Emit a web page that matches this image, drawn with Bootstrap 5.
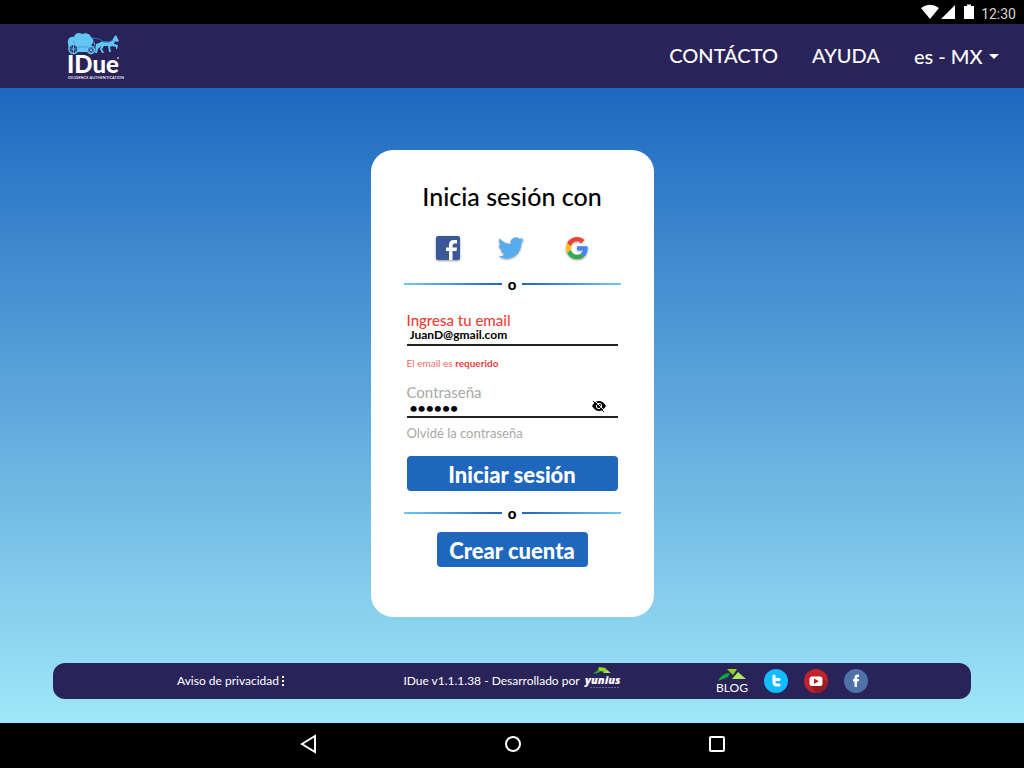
<!DOCTYPE html>
<html lang="es-MX">
<head>
<meta charset="utf-8">
<meta name="viewport" content="width=device-width, initial-scale=1">
<title>IDue - Inicia sesión</title>
<link rel="stylesheet" href="https://cdn.jsdelivr.net/npm/bootstrap@5.3.0/dist/css/bootstrap.min.css">
<style>
:root { --navy: #29235a; --brand: #1e67bd; --sky: #6bc9f2; }
body { font-family: Lato, "Open Sans", sans-serif; background: #000; color: #000; }
svg { display: block; }
a { text-decoration: none; }
.status-bar { height: 24px; padding-right: 8px; font: 14px/24px Roboto, sans-serif; color: #d4d4d4; }
.clock { padding-top: 3px; margin-left: 7px; }
.top-nav { height: 64px; padding: 0 25px 0 64px; background: var(--navy); }
.top-nav a, .lang select { color: #fff; font-size: 20px; line-height: 24px; font-weight: 500; }
.nav-items { gap: 34px; }
.lang { position: relative; }
.lang select { display: block; appearance: none; background: none; border: 0; padding: 0 14px 0 0; width: 85px; }
.lang::after { content: ""; position: absolute; right: 0; top: 10px; border: 5px solid transparent; border-top-color: #fff; border-bottom: 0; pointer-events: none; }
main { background: linear-gradient(#1e68c0, #9fe7f8); padding: 62px 53px 24px; }
.login { width: 283px; border-radius: 22px; padding: 28px 33px 50px; }
.login h1 { font-size: 25px; line-height: 36px; margin-bottom: 18px; }
.social { gap: 32px; height: 30px; padding-right: 1px; }
.social svg { filter: drop-shadow(0 1px 1px rgba(0,0,0,.4)); }
.divider { height: 16px; margin-top: 14px; font-size: 15px; line-height: 16px; font-weight: 900; }
.divider span { width: 20px; }
.divider::before, .divider::after { content: ""; flex: 1; height: 2px; background: linear-gradient(90deg, var(--sky), var(--brand)); }
.divider::after { background: linear-gradient(90deg, var(--brand), var(--sky)); }
.fields { padding: 0 3px; margin-top: 20px; }
.fields label { display: block; font-size: 15px; line-height: 16px; color: #a8a8a8; }
.fields .invalid { color: #ee3e3a; font-weight: 500; }
.entry { border-bottom: 2px solid #222; height: 18px; }
.entry input { border: 0; outline: 0; background: none; padding: 0 3px; height: 14px; width: 100%; min-width: 0; font-size: 12px; line-height: 14px; font-weight: 700; color: #000; }
.entry input[type=password] { font-size: 14px; }
.peek { border: 0; background: none; padding: 0; margin-right: 12px; }
.hint { font-size: 10px; line-height: 14px; color: #f06a66; margin: 10px 0 14px; }
.hint b { color: #ee3e3a; }
.forgot { display: block; font-size: 13px; line-height: 14px; color: #a8a8a8; margin: 8px 0 16px; }
.main-btn { height: 35px; border-radius: 4px; padding: 0; background: var(--brand); color: #fff; font-size: 22px; line-height: 35px; font-weight: 900; }
.main-btn:hover { background: #1a5aa6; color: #fff; }
.create { width: 151px; margin-top: 11px; }
.foot { min-height: 36px; border-radius: 12px; background: var(--navy); color: #fff; font-size: 12px; line-height: 14px; padding: 0 103px 0 124px; }
.foot a { color: #fff; }
.foot .version { margin-left: 24px; }
.foot .blog { line-height: 13px; }
.foot .links { gap: 16px; }
.system-nav { height: 45px; padding: 0 298px 4px 300px; }
.system-nav button { border: 0; background: none; padding: 0; }
</style>
</head>
<body class="d-flex flex-column min-vh-100">
<div class="status-bar d-flex justify-content-end align-items-center">
  <svg width="54" height="24" viewBox="0 0 54 24" fill="#fff" aria-hidden="true"><path d="M1 8Q10 1.500 19 8L10 19ZM35 5v14H21ZM44 6h3V4.500h4V6h3v13H44Z"/></svg>
  <span class="clock">12:30</span>
</div>

<nav class="top-nav d-flex align-items-center justify-content-between">
  <a href="#" aria-label="IDue">
    <svg width="60" height="52" viewBox="0 0 60 52">
      <g fill="#63c5f4">
        <path d="M4 14C3 9 6 6 10 7C11 3 15 2 18 4C22 2 26 4 27 7C30 9 30 12 28 14L26 22H9L5 19Z"/>
        <path d="M29 11C31 14 30 20 25 22L29 23L31 13Z"/>
        <path d="M35 13C40 10 44 13 48 11L50 7L52 5L53 7L55 11L53 12L51 11L50 14L54 15L53 19L52 19V17L48 16L46 17L47 22H45L44 16L40 16L38 19L40 23H38L36 19L37 16L34 19L33 23H31L32 17L34 15L32 17L31 20L32 14Z"/>
      </g>
      <path d="M29 8Q36 8 40 12Q45 13 49 10" fill="none" stroke="#287bb4"/>
      <path d="M10 11V17H25" fill="none" stroke="#3b9fdb"/>
      <g fill="#29235a" stroke="#63c5f4" stroke-width="1.500"><circle cx="9.500" cy="19" r="4.500"/><circle cx="27" cy="20" r="3.500"/></g>
      <path d="M9.500 15V23M5.500 19H13.500M6.500 16L12.500 22M12.500 16L6.500 22M27 17V23M24 20H30M25 18L29 22M29 18L25 22" stroke="#63c5f4" stroke-width=".7"/>
      <text x="3" y="43" font-family="Lato, sans-serif" font-size="24" font-weight="900" fill="#fff">IDue</text>
      <circle cx="54" cy="28" r="1" fill="#bbb"/>
      <text x="4" y="49" font-family="Lato, sans-serif" font-size="4" fill="#fff">DILIGENCE AUTHENTICATION</text>
    </svg>
  </a>
  <ul class="nav-items list-unstyled d-flex align-items-center m-0">
    <li><a href="#">CONTÁCTO</a></li>
    <li><a href="#">AYUDA</a></li>
    <li class="lang"><select aria-label="Idioma"><option>es - MX</option></select></li>
  </ul>
</nav>

<main class="flex-grow-1 d-flex flex-column justify-content-between">
  <form class="login bg-white mx-auto d-flex flex-column">
    <h1 class="text-center">Inicia sesión con</h1>
    <div class="social d-flex justify-content-center">
      <a href="#" aria-label="Facebook"><svg width="32" height="32" viewBox="0 0 32 32"><rect x="4" y="4" width="24" height="24" rx="2" fill="#3b5998"/><path d="M17 28V19H14V15.500H17V13Q17 8 22 8H25V11.500H22.500Q20.500 11.500 20.500 13.500V15.500H25L24.500 19H20.500V28Z" fill="#fff"/></svg></a>
      <a href="#" aria-label="Twitter"><svg width="32" height="32" viewBox="0 0 32 32"><g transform="translate(2 3) scale(1.080)"><path fill="#55acee" d="M23.950 4.570a10 10 0 0 1-2.820.770 4.960 4.960 0 0 0 2.160-2.720c-.950.550-2 .950-3.130 1.180a4.920 4.920 0 0 0-8.380 4.480C7.690 8.090 4.070 6.130 1.640 3.160a4.820 4.820 0 0 0-.660 2.480c0 1.710.870 3.210 2.190 4.100a4.900 4.900 0 0 1-2.230-.620v.060a4.920 4.920 0 0 0 3.950 4.830 5 5 0 0 1-2.210.080 4.940 4.940 0 0 0 4.600 3.420A9.870 9.870 0 0 1 0 19.540a14 14 0 0 0 7.550 2.210c9.050 0 14-7.500 14-13.980l-.020-.640a9.900 9.900 0 0 0 2.420-2.560z"/></g></svg></a>
      <a href="#" aria-label="Google"><svg width="32" height="32" viewBox="0 0 32 32"><g transform="translate(6 5) scale(.460)"><path fill="#ea4335" d="M24 9.500c3.540 0 6.710 1.220 9.210 3.600l6.850-6.850C35.900 2.380 30.470 0 24 0 14.620 0 6.510 5.380 2.560 13.220l7.980 6.190C12.430 13.720 17.740 9.500 24 9.500z"/><path fill="#4285f4" d="M46.980 24.550c0-1.570-.150-3.090-.380-4.550H24v9.020h12.940c-.580 2.960-2.260 5.480-4.780 7.180l7.730 6c4.510-4.180 7.090-10.360 7.090-17.650z"/><path fill="#fbbc05" d="M10.530 28.590A14.500 14.500 0 0 1 9.770 24c0-1.600.270-3.140.760-4.590l-7.980-6.190A24 24 0 0 0 0 24c0 3.880.920 7.540 2.560 10.780z"/><path fill="#34a853" d="M24 48c6.480 0 11.930-2.130 15.890-5.810l-7.730-6c-2.150 1.450-4.920 2.300-8.160 2.300-6.260 0-11.570-4.220-13.470-9.910l-7.980 6.190C6.510 42.620 14.620 48 24 48z"/></g></svg></a>
    </div>
    <div class="divider d-flex align-items-center text-center"><span>o</span></div>
    <div class="fields">
      <label class="invalid" for="email">Ingresa tu email</label>
      <div class="entry d-flex"><input id="email" type="email" value="JuanD@gmail.com"></div>
      <p class="hint">El email es <b>requerido</b></p>
      <label for="pass">Contraseña</label>
      <div class="entry d-flex align-items-start">
        <input id="pass" type="password" value="123456">
        <button class="peek" type="button" aria-label="Mostrar contraseña"><svg width="14" height="12" viewBox="0 0 14 12"><path d="M0 6Q3 1 7 1T14 6Q11 11 7 11T0 6Z"/><circle cx="7" cy="6" r="2.700" fill="none" stroke="#fff"/><circle cx="7" cy="6" r="1.300"/><path d="M2 0L13 11" stroke="#fff" stroke-width="1"/><path d="M1 1L12 12" stroke="#000"/></svg></button>
      </div>
      <a class="forgot" href="#">Olvidé la contraseña</a>
      <button class="btn main-btn w-100" type="submit">Iniciar sesión</button>
    </div>
    <div class="divider d-flex align-items-center text-center"><span>o</span></div>
    <button class="btn main-btn create mx-auto" type="button">Crear cuenta</button>
  </form>

  <footer class="foot d-flex align-items-center justify-content-between">
    <a class="d-flex align-items-center" href="#">Aviso de privacidad
      <svg width="6" height="12" viewBox="0 0 6 12" fill="#fff"><path d="M3 1h2v2H3zM3 5h2v2H3zM3 9h2v2H3z"/></svg></a>
    <div class="version d-flex align-items-center gap-1">IDue v1.1.1.38 - Desarrollado por
      <svg width="38" height="30" viewBox="0 0 38 30" role="img" aria-label="yunius">
        <path fill="#1aab39" d="M9 8L14 4L19 4L14 7Z"/><path fill="#9bdc18" d="M15 1L22 2L20 6L14 4Z"/><path fill="#9ae35b" d="M19 7L22 3L27 7Z"/>
        <text x="1" y="18" font-family="Open Sans, sans-serif" font-size="11" font-weight="800" font-style="italic" fill="#fff">yunius</text>
        <path d="M6 21.500H35" stroke="#6b6790" stroke-dasharray="2 1"/>
      </svg></div>
    <div class="links d-flex align-items-center">
      <a class="blog" href="#"><svg class="mx-auto" width="30" height="12" viewBox="0 0 30 12"><path fill="#12a537" d="M1 12Q5 4 13 4L11 8Z"/><path fill="#95d60b" d="M10 0H20L16 6Z"/><path fill="#aee85d" d="M15 10L21 3L29 10Z"/></svg>BLOG</a>
      <a href="#" aria-label="Twitter"><svg width="24" height="24" viewBox="0 0 24 24"><circle cx="12" cy="12" r="12" fill="#13bbff"/><path d="M10 7V13Q10 16 13 16H15M10 10.500H15" fill="none" stroke="#fff" stroke-width="3" stroke-linecap="round"/></svg></a>
      <a href="#" aria-label="YouTube"><svg width="24" height="24" viewBox="0 0 24 24"><circle cx="12" cy="12" r="12" fill="#c4222b"/><path d="M18 8L23.500 14Q21 23 12 24L6 16Z" fill="#981b25"/><rect x="5.500" y="7.500" width="13" height="9.500" rx="2.500" fill="#fff"/><path d="M10 9.500L15 12.200L10 15Z" fill="#b9222a"/></svg></a>
      <a href="#" aria-label="Facebook"><svg width="24" height="24" viewBox="0 0 24 24"><circle cx="12" cy="12" r="12" fill="#4e71a8"/><path d="M10.500 18V12.500H9V10H10.500V8.500Q10.500 5.500 13.500 5.500H15V8H14Q13 8 13 9V10H15L14.700 12.500H13V18Z" fill="#fff"/></svg></a>
    </div>
  </footer>
</main>

<div class="system-nav d-flex align-items-center justify-content-between">
  <button type="button" aria-label="Atrás"><svg width="18" height="20" viewBox="0 0 18 20"><path d="M2 10L15 2V18Z" fill="none" stroke="#fff" stroke-width="2"/></svg></button>
  <button type="button" aria-label="Inicio"><svg width="18" height="18" viewBox="0 0 18 18"><circle cx="9" cy="9" r="7" fill="none" stroke="#fff" stroke-width="2"/></svg></button>
  <button type="button" aria-label="Recientes"><svg width="18" height="18" viewBox="0 0 18 18"><rect x="2" y="2" width="14" height="14" rx="1" fill="none" stroke="#fff" stroke-width="2"/></svg></button>
</div>
<script src="https://cdn.jsdelivr.net/npm/bootstrap@5.3.0/dist/js/bootstrap.bundle.min.js"></script>
</body>
</html>
